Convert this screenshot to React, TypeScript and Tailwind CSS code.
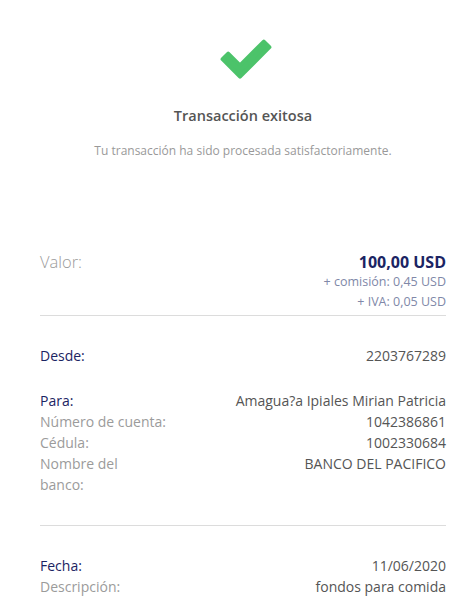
import React from "react";

const font = { fontFamily: "'Open Sans', Lato, sans-serif" };

function Row({ label, value, navy }: { label: React.ReactNode; value: string; navy?: boolean }) {
  return (
    <div className="flex justify-between items-start text-[14px] leading-[21px]">
      <div className={navy ? "text-[#1b2463]" : "text-[#9b9b9b]"}>{label}</div>
      <div className="text-[#555555] text-right">{value}</div>
    </div>
  );
}

export default function App() {
  return (
    <div className="w-[473px] h-[615px] bg-white overflow-hidden pl-[40px] pr-[27px]" style={font}>
      <div className="flex flex-col items-center pt-[34px]">
        <svg width="60" height="50" viewBox="0 0 60 50">
          <polygon
            points="15.2,19.6 27,31.3 50.8,7.6 56.4,13.2 27,42.7 9.6,25.2"
            fill="#4cc36a"
            stroke="#4cc36a"
            strokeWidth="4"
            strokeLinejoin="round"
          />
        </svg>
        <div className="mt-[22px] text-[14.5px] leading-[20px] font-semibold text-[#555555]">Transacción exitosa</div>
        <div className="mt-[16px] text-[12px] leading-[17px] text-[#999999]">
          Tu transacción ha sido procesada satisfactoriamente.
        </div>
      </div>

      <div className="mt-[93px]">
        <div className="flex justify-between items-start">
          <div className="text-[16.5px] leading-[20px] font-light text-[#9b9b9b]">Valor:</div>
          <div className="flex flex-col items-end">
            <div className="text-[16px] leading-[20px] font-bold text-[#1b2463]">100,00 USD</div>
            <div className="text-[12.5px] leading-[20px] text-[#8088a8]">+ comisión: 0,45 USD</div>
            <div className="text-[12.5px] leading-[20px] text-[#8088a8]">+ IVA: 0,05 USD</div>
          </div>
        </div>
        <div className="mt-[3px] border-t border-[#dcdcdc]" />

        <div className="mt-[29px]">
          <Row label="Desde:" value="2203767289" navy />
        </div>

        <div className="mt-[24px]">
          <Row label="Para:" value="Amagua?a Ipiales Mirian Patricia" navy />
          <Row label="Número de cuenta:" value="1042386861" />
          <Row label="Cédula:" value="1002330684" />
          <Row
            label={
              <>
                Nombre del
                <br />
                banco:
              </>
            }
            value="BANCO DEL PACIFICO"
          />
        </div>
        <div className="mt-[30px] border-t border-[#dcdcdc]" />

        <div className="mt-[29px]">
          <Row label="Fecha:" value="11/06/2020" navy />
          <Row label="Descripción:" value="fondos para comida" />
        </div>
      </div>
    </div>
  );
}
